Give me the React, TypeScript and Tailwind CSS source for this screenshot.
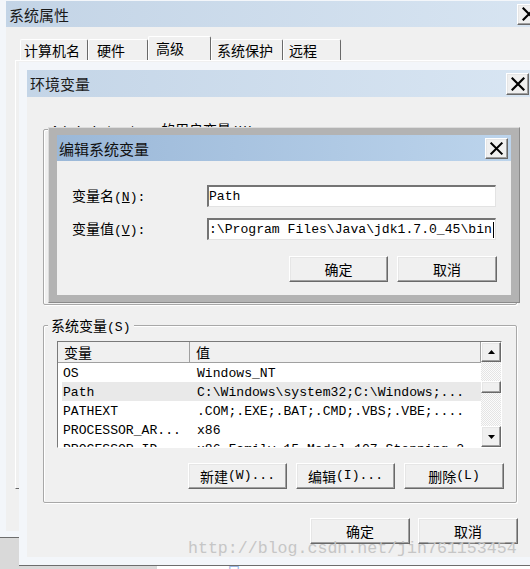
import React from "react";

const MONO = "font-[family-name:'Liberation_Mono','Noto_Sans_CJK_SC',monospace] text-[13.1px]";
const CJKC = "font-[family-name:'Noto_Sans_CJK_SC',sans-serif] text-[14px]";
const RAISED =
  "bg-[#f0f0f0] border border-t-white border-l-white border-r-[#696969] border-b-[#696969] shadow-[inset_-1px_-1px_0_#a0a0a0,inset_1px_1px_0_#e6e6e6]";

const CJK_RE = /([\u2e80-\u9fff\uf900-\ufaff\uff00-\uffef]+)/;

function Mixed({ text }: { text: string }) {
  const parts = text.split(CJK_RE);
  return (
    <>
      {parts.map((p, i) =>
        p === "" ? null : i % 2 === 1 ? (
          <span key={i} className={CJKC}>
            {p}
          </span>
        ) : (
          <span key={i}>{p}</span>
        )
      )}
    </>
  );
}

function XIcon({ size }: { size: number }) {
  return (
    <svg width={size} height={size} viewBox="0 0 14 14">
      <path d="M1.5 1.5L12.5 12.5M12.5 1.5L1.5 12.5" stroke="#000" strokeWidth="2.2" strokeLinecap="square" />
    </svg>
  );
}

function CloseBtn({ className, size }: { className: string; size: number }) {
  return (
    <div className={`flex items-center justify-center shrink-0 ${RAISED} ${className}`}>
      <XIcon size={size} />
    </div>
  );
}

function Btn({ children, className }: { children: React.ReactNode; className: string }) {
  return (
    <div className={`flex items-center justify-center leading-[16px] ${MONO} ${RAISED} ${className}`}>{children}</div>
  );
}

function Tab({ label, className, selected }: { label: string; className: string; selected?: boolean }) {
  return (
    <div
      className={`flex items-center shrink-0 border-t border-l border-r border-t-white border-l-white border-r-[#696969] rounded-t-[2px] text-[14px] leading-none text-black ${
        selected ? "h-[24px] bg-[#f0f0f0] pb-[2px]" : "h-[21px]"
      } ${className}`}
    >
      {label}
    </div>
  );
}

function GroupBox({
  label,
  className,
  children,
}: {
  label: string;
  className: string;
  children?: React.ReactNode;
}) {
  return (
    <div
      className={`relative w-[474px] border border-[#a8a8a8] rounded-[2px] shadow-[inset_1px_1px_0_#ffffff,1px_1px_0_#ffffff] ${className}`}
    >
      <div className={`absolute -top-[9px] left-[4px] px-[3px] bg-[#f0f0f0] leading-[16px] whitespace-nowrap ${MONO}`}>
        <Mixed text={label} />
      </div>
      {children}
    </div>
  );
}

function Arrow({ up }: { up?: boolean }) {
  return (
    <svg width="7" height="4" viewBox="0 0 7 4">
      <path d={up ? "M3.5 0L7 4H0z" : "M0 0H7L3.5 4z"} fill="#000" />
    </svg>
  );
}

const rows: [string, string, boolean][] = [
  ["OS", "Windows_NT", false],
  ["Path", "C:\\Windows\\system32;C:\\Windows;...", true],
  ["PATHEXT", ".COM;.EXE;.BAT;.CMD;.VBS;.VBE;....", false],
  ["PROCESSOR_AR...", "x86", false],
  ["PROCESSOR_ID...", "x86 Family 15 Model 107 Stepping 2, ...", false],
];

export default function App() {
  return (
    <div className="relative w-[530px] h-[569px] overflow-hidden bg-white text-black font-[family-name:'Noto_Sans_CJK_SC',sans-serif]">
      {/* desktop behind */}
      <div className="absolute left-0 top-[538px] w-[157px] h-[31px] bg-[#d9d9d9]" />
      <div className="absolute left-[227px] top-[564px] text-[14px] leading-none text-[#9bb6e2]">目</div>

      {/* 系统属性 window */}
      <div className="absolute left-0 top-0 w-[560px] h-[538px] flex flex-col bg-[#f3f6fa] pt-[1px] pl-[6px] pr-[6px] pb-[6px] border-b border-[#6d6d6d]">
        <div className="h-[26px] shrink-0 flex items-center bg-linear-to-r from-[#c3d4e6] to-[#d8e5f2] pl-[3px]">
          <span className="text-[15px] leading-none text-[#1a1a1a]">系统属性</span>
          <CloseBtn className="ml-auto mr-[14px] w-[23px] h-[21px]" size={14} />
        </div>
        <div className="flex-1 bg-[#f0f0f0] flex flex-col pt-[9px]">
          <div className="flex items-end h-[24px] pl-[14px]">
            <Tab label="计算机名" className="w-[68px] pl-[3px]" />
            <Tab label="硬件" className="w-[60px] pl-[8px]" />
            <Tab label="高级" className="w-[63px] pl-[7px]" selected />
            <Tab label="系统保护" className="w-[72px] pl-[5px]" />
            <Tab label="远程" className="w-[58px] pl-[5px]" />
          </div>
          <div className="ml-[9px] h-[429px] border border-t-white border-l-white border-r-[#696969] border-b-[#696969]" />
        </div>
      </div>

      {/* 环境变量 window */}
      <div className="absolute left-[19px] top-[62px] w-[540px] h-[504px] flex flex-col bg-[#f3f6fa] p-[8px] border-b border-[#6d6d6d]">
        <div className="h-[27px] shrink-0 flex items-center bg-linear-to-r from-[#c4d5e7] to-[#d9e6f3] pl-[3px]">
          <span className="text-[15px] leading-none text-[#1a1a1a]">环境变量</span>
          <CloseBtn className="ml-auto mr-[22px] w-[23px] h-[22px]" size={14} />
        </div>
        <div className="flex-1 bg-[#f0f0f0] flex flex-col pl-[16px] pt-[32px]">
          <GroupBox label="Administrator 的用户变量(U)" className="h-[176px] shrink-0" />
          <GroupBox label="系统变量(S)" className="mt-[20px] h-[178px] shrink-0 pt-[15px] pl-[13px] flex flex-col">
            <div className="w-[445px] h-[107px] shrink-0 flex border border-t-[#7a7a7a] border-l-[#7a7a7a] border-b-white border-r-white bg-white">
              <div className="w-[423px] flex flex-col overflow-hidden">
                <div className="h-[21px] shrink-0 flex bg-[#f0f0f0] border-b border-[#a0a0a0]">
                  <div className="w-[132px] shrink-0 border-r border-[#a0a0a0] pl-[6px] flex items-center text-[14px] leading-none">
                    变量
                  </div>
                  <div className="flex-1 border-r border-[#a0a0a0] pl-[6px] flex items-center text-[14px] leading-none">
                    值
                  </div>
                </div>
                {rows.map(([n, v, sel]) => (
                  <div
                    key={n}
                    className={`h-[19px] shrink-0 ml-[4px] flex items-center pt-[2px] whitespace-nowrap leading-[16px] ${MONO} ${
                      sel ? "bg-[#e9e9e9]" : ""
                    }`}
                  >
                    <div className="w-[135px] shrink-0 pl-[1px]">{n}</div>
                    <div>{v}</div>
                  </div>
                ))}
              </div>
              <div className="w-[20px] flex flex-col bg-[repeating-conic-gradient(#e4e4e4_0%_25%,#fbfbfb_0%_50%)] bg-[length:2px_2px]">
                <div className={`h-[20px] shrink-0 flex items-center justify-center ${RAISED}`}>
                  <Arrow up />
                </div>
                <div className="h-[19px] shrink-0" />
                <div className={`h-[12px] shrink-0 ${RAISED}`} />
                <div className="flex-1" />
                <div className={`h-[21px] shrink-0 flex items-center justify-center ${RAISED}`}>
                  <Arrow />
                </div>
              </div>
            </div>
            <div className="mt-[15px] w-[447px] flex justify-end gap-[9px]">
              <Btn className="w-[99px] h-[26px]">
                <Mixed text="新建(W)..." />
              </Btn>
              <Btn className="w-[99px] h-[26px]">
                <Mixed text="编辑(I)..." />
              </Btn>
              <Btn className="w-[100px] h-[26px]">
                <Mixed text="删除(L)" />
              </Btn>
            </div>
          </GroupBox>
          <div className="mt-[15px] w-[475px] flex justify-end gap-[8px]">
            <Btn className="w-[100px] h-[26px]">
              <Mixed text="确定" />
            </Btn>
            <Btn className="w-[100px] h-[26px]">
              <Mixed text="取消" />
            </Btn>
          </div>
        </div>
      </div>

      {/* 编辑系统变量 dialog */}
      <div className="absolute left-[48px] top-[127px] w-[472px] h-[176px] flex flex-col bg-[#b3b3b3] px-[8px] py-[7px] border border-t-[#dcdcdc] border-l-[#dcdcdc] border-r-[#8a8a8a] border-b-[#8a8a8a]">
        <div className="h-[26px] shrink-0 flex items-center bg-linear-to-r from-[#9bb8d8] to-[#bcd4ec] pl-[2px]">
          <span className="text-[15px] leading-none text-[#111]">编辑系统变量</span>
          <CloseBtn className="ml-auto mr-[3px] w-[23px] h-[21px]" size={13} />
        </div>
        <div className="flex-1 bg-[#f0f0f0] flex flex-col pl-[15px] pr-[14px] pt-[24px]">
          <div className="flex items-center h-[22px]">
            <div className={`w-[135px] shrink-0 leading-[16px] ${MONO}`}>
              <span className={CJKC}>变量名</span>(<span className="underline">N</span>):
            </div>
            <div
              className={`w-[289px] h-[22px] flex items-center bg-white border-t-2 border-l-2 border-b border-r border-t-[#747474] border-l-[#747474] border-b-[#e3e3e3] border-r-[#e3e3e3] leading-[16px] whitespace-nowrap ${MONO}`}
            >
              Path
            </div>
          </div>
          <div className="flex items-center h-[22px] mt-[11px]">
            <div className={`w-[135px] shrink-0 leading-[16px] ${MONO}`}>
              <span className={CJKC}>变量值</span>(<span className="underline">V</span>):
            </div>
            <div
              className={`w-[289px] h-[22px] flex items-center overflow-hidden bg-white border-t-2 border-l-2 border-b border-r border-t-[#747474] border-l-[#747474] border-b-[#e3e3e3] border-r-[#e3e3e3] leading-[16px] whitespace-nowrap ${MONO}`}
            >
              <span>:\Program Files\Java\jdk1.7.0_45\bin</span>
              <span className="inline-block w-px h-[16px] bg-black ml-[1px]" />
            </div>
          </div>
          <div className="mt-[16px] flex justify-end gap-[9px]">
            <Btn className="w-[99px] h-[26px]">
              <Mixed text="确定" />
            </Btn>
            <Btn className="w-[100px] h-[26px]">
              <Mixed text="取消" />
            </Btn>
          </div>
        </div>
      </div>

      {/* watermark */}
      <div className="absolute left-[188px] top-[539px] text-[16.6px] leading-[20px] whitespace-nowrap text-[#c6c6c6] font-[family-name:'Liberation_Mono',monospace]">
        http://blog.csdn.net/jin761153454
      </div>
    </div>
  );
}
